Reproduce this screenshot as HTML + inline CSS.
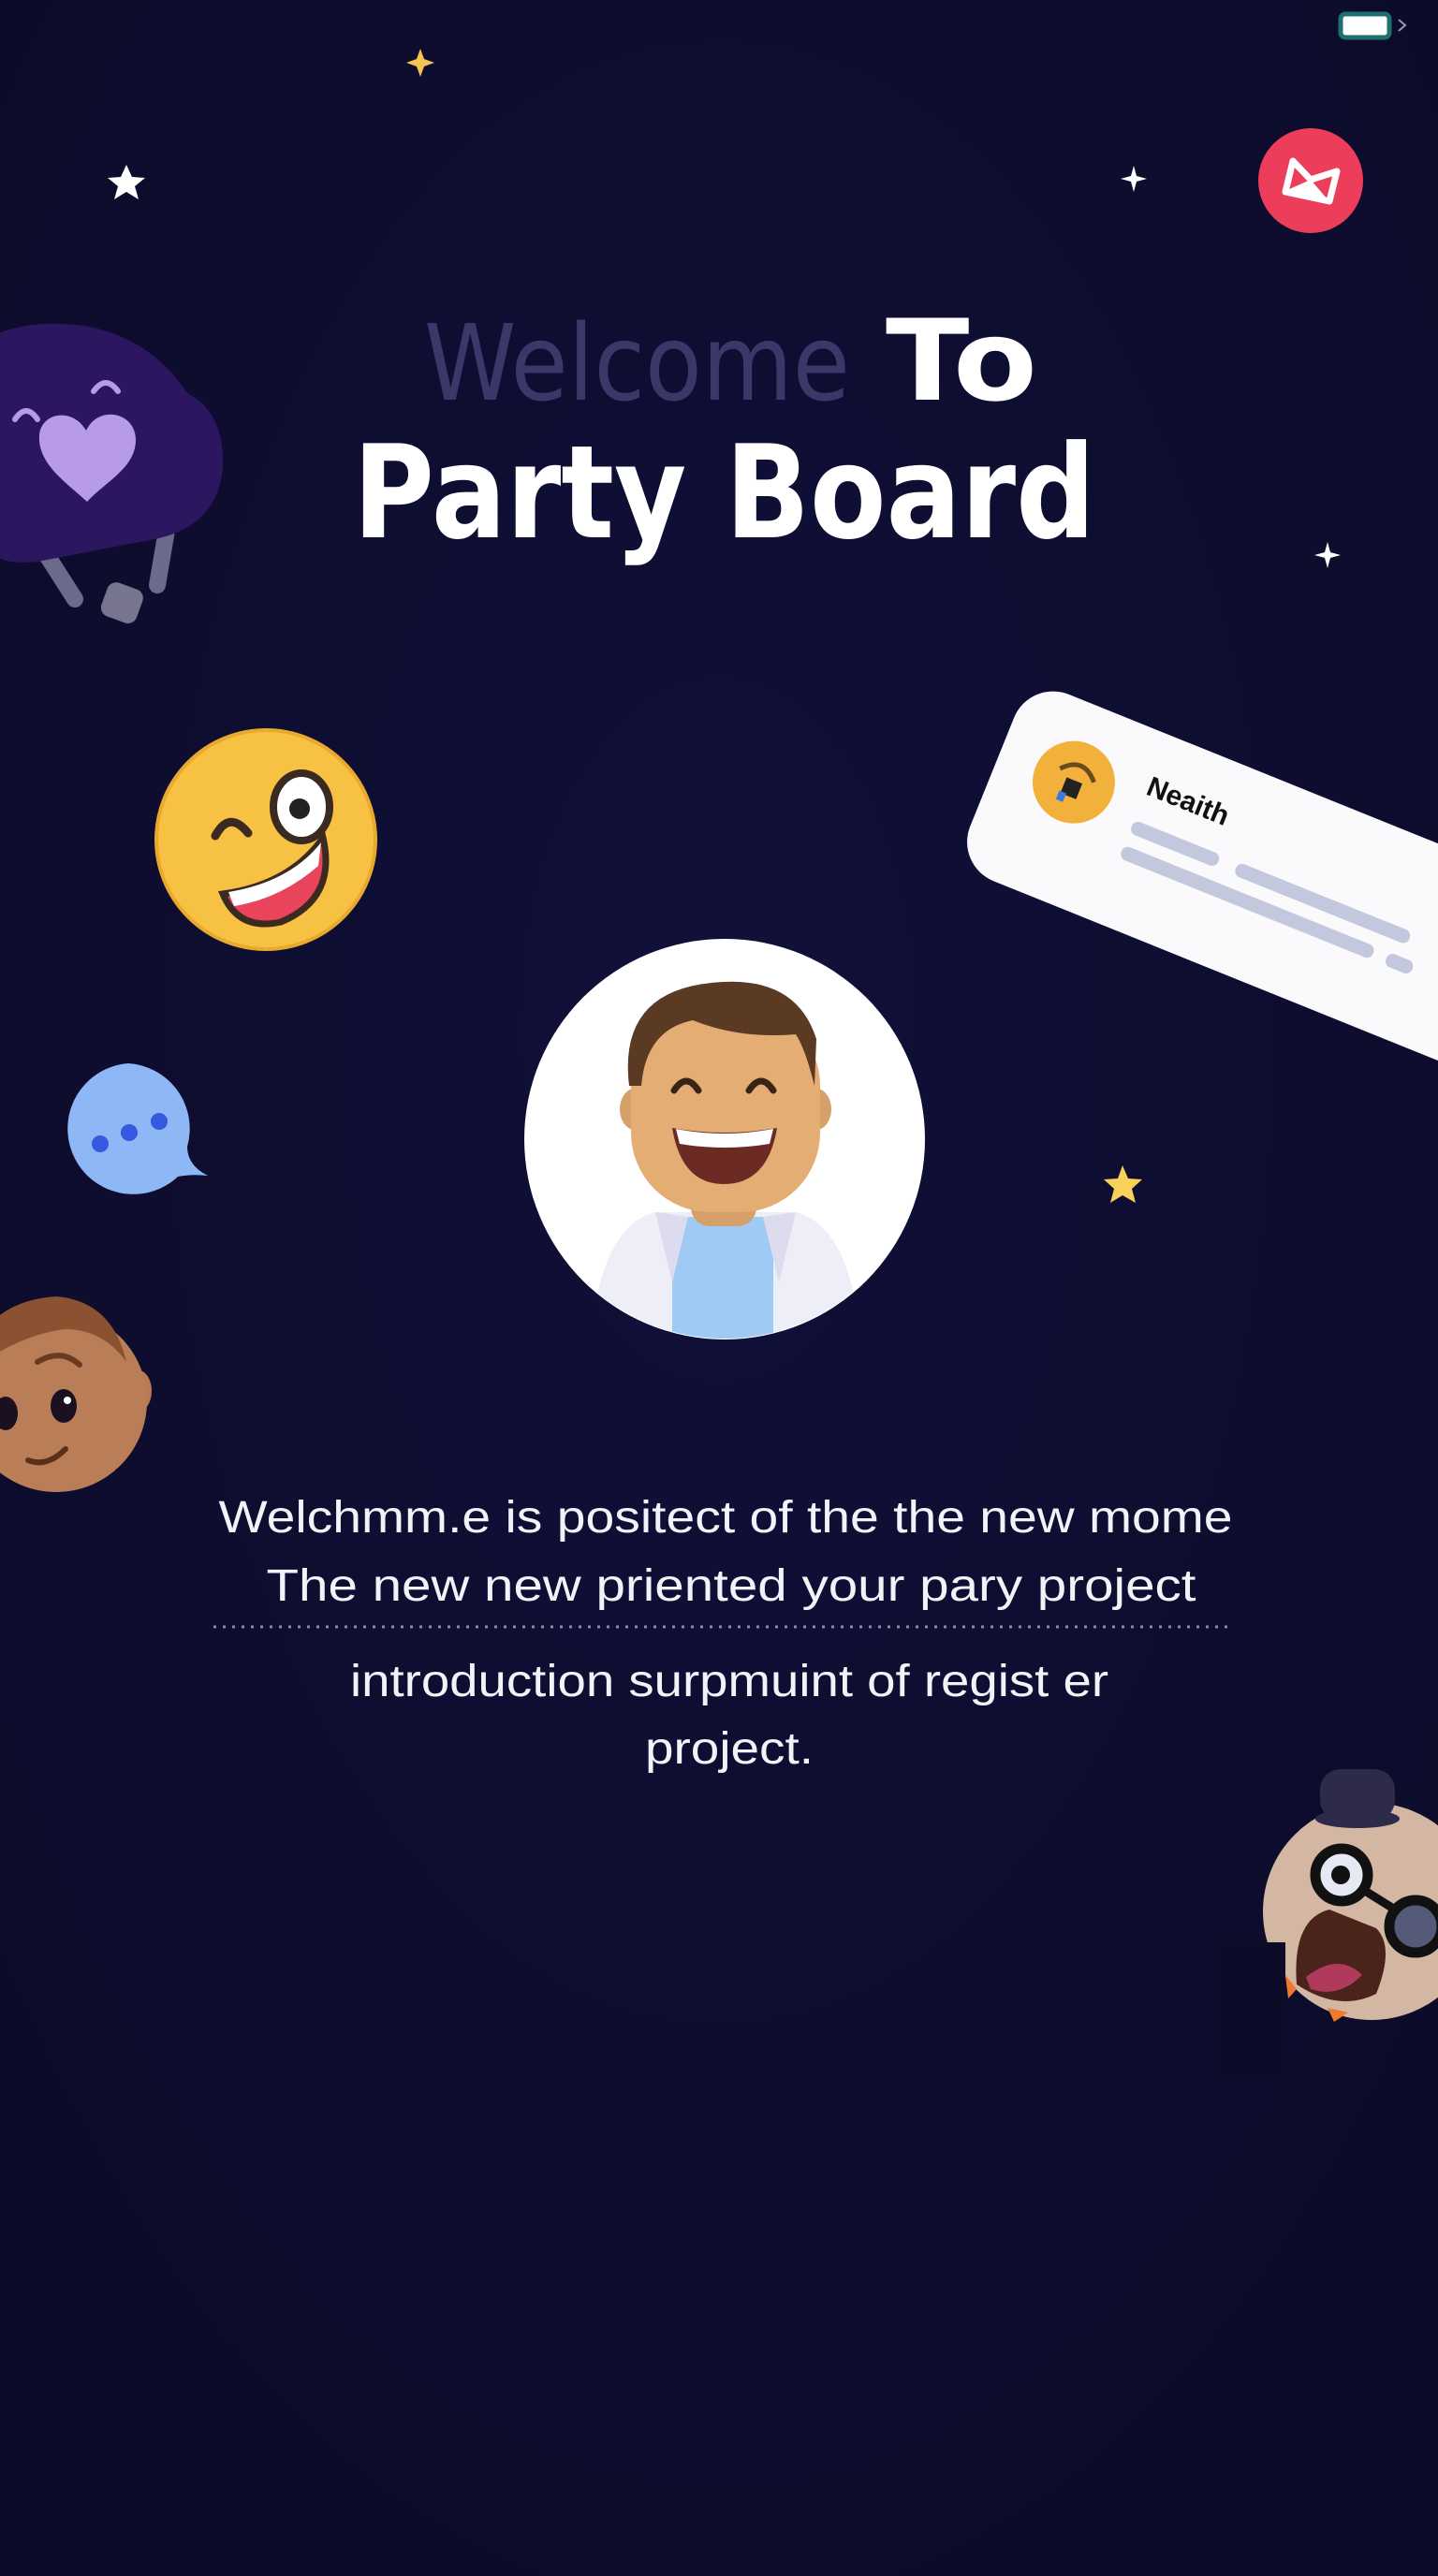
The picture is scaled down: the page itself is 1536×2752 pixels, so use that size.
<!DOCTYPE html>
<html><head><meta charset="utf-8">
<style>
html,body{margin:0;padding:0}
body{width:1536px;height:2752px;background:#0e0d2b;position:relative;overflow:hidden;font-family:"Liberation Sans",sans-serif}
.abs{position:absolute}
</style></head><body>
<svg class="abs" style="left:0;top:0" width="1536" height="2752" viewBox="0 0 1536 2752">
<defs>
<radialGradient id="bg" cx="50%" cy="40%" r="70%"><stop offset="0" stop-color="#10103a"/><stop offset="1" stop-color="#0c0b28"/></radialGradient>
<clipPath id="av"><circle cx="774" cy="1217" r="213"/></clipPath>
</defs>
<rect width="1536" height="2752" fill="url(#bg)"/>
<!-- battery -->
<rect x="1432" y="15" width="52" height="25" rx="5" fill="#fff" stroke="#1f6f6f" stroke-width="5"/>
<path d="M1494 21 L1501 27 L1494 33" stroke="#99a" stroke-width="2" fill="none"/>
<!-- red button -->
<circle cx="1400" cy="193" r="56" fill="#ec3d5a"/>
<path d="M1373 205 L1381 172 L1400 192 L1428 183 L1420 215 Z" fill="none" stroke="#fff" stroke-width="7" stroke-linejoin="round"/>
<path d="M1375 203 L1400 192 L1418 213 Z" fill="#fff"/>
<!-- stars -->
<g fill="#f5c451"><path d="M449 52 L453 63 L464 67 L453 71 L449 82 L445 71 L434 67 L445 63Z"/></g>
<g fill="#fff">
<path d="M135 176 L141 189 L155 190 L144 199 L148 213 L135 205 L122 213 L126 199 L115 190 L129 189Z"/>
<path d="M1211 177 L1214 188 L1225 191 L1214 194 L1211 205 L1208 194 L1197 191 L1208 188Z"/>
<path d="M1418 579 L1421 590 L1432 593 L1421 596 L1418 607 L1415 596 L1404 593 L1415 590Z"/>
</g>
<path d="M1199 1245 L1205 1259 L1220 1260 L1209 1270 L1213 1285 L1199 1277 L1186 1285 L1190 1270 L1179 1260 L1194 1259Z" fill="#f7d15a"/>
<!-- purple blob -->
<path d="M48 590 L80 640 M180 555 L168 625" stroke="#6c6a8a" stroke-width="18" stroke-linecap="round"/>
<rect x="110" y="625" width="40" height="38" rx="10" fill="#77758f" transform="rotate(20 130 645)"/>
<path d="M-10 360 Q30 340 90 348 Q160 360 200 420 Q240 440 238 500 Q232 560 170 575 L40 600 Q-10 605 -10 580Z" fill="#2c1660"/>
<path d="M93 536 C70 515 40 495 42 465 C44 440 78 435 92 460 C105 432 145 440 145 470 C145 500 112 515 93 536Z" fill="#b79ae8"/>
<path d="M100 418 Q113 400 126 418" stroke="#b79ae8" stroke-width="6" fill="none" stroke-linecap="round"/>
<path d="M16 448 Q28 430 40 448" stroke="#b79ae8" stroke-width="6" fill="none" stroke-linecap="round"/>
<!-- wink emoji -->
<circle cx="284" cy="897" r="117" fill="#f7c144" stroke="#e9a92c" stroke-width="4"/>
<ellipse cx="322" cy="862" rx="30" ry="36" fill="#fff" stroke="#3a2a20" stroke-width="8"/>
<circle cx="320" cy="864" r="11" fill="#222"/>
<path d="M230 893 Q245 865 265 890" stroke="#3a2a20" stroke-width="9" fill="none" stroke-linecap="round"/>
<path d="M238 955 Q310 945 345 895 Q360 960 300 985 Q255 995 238 955Z" fill="#e8455c" stroke="#3a2a20" stroke-width="7"/>
<path d="M244 953 Q310 942 343 900 L340 925 Q300 960 250 968Z" fill="#fff"/>
<!-- chat bubble -->
<path d="M137 1136 A70 70 0 1 0 190 1257 Q205 1254 222 1256 Q200 1245 200 1225 A70 70 0 0 0 137 1136Z" fill="#8db8f5"/>
<circle cx="107" cy="1222" r="9" fill="#3559e0"/><circle cx="138" cy="1210" r="9" fill="#3559e0"/><circle cx="170" cy="1198" r="9" fill="#3559e0"/>
<!-- avatar -->
<circle cx="774" cy="1217" r="214" fill="#fff"/>
<g clip-path="url(#av)">
<path d="M630 1440 Q640 1310 700 1295 L850 1295 Q910 1310 920 1440Z" fill="#eeeef8"/>
<rect x="718" y="1300" width="108" height="150" fill="#9fcaf3"/>
<path d="M700 1295 L735 1300 L718 1370Z M850 1295 L815 1300 L832 1370Z" fill="#dcdcee"/>
<rect x="738" y="1255" width="70" height="55" rx="20" fill="#d6a06a"/>
<ellipse cx="678" cy="1185" rx="16" ry="22" fill="#d6a06a"/><ellipse cx="872" cy="1185" rx="16" ry="22" fill="#d6a06a"/>
<rect x="674" y="1075" width="202" height="220" rx="85" fill="#e3ad74"/>
<path d="M672 1160 Q660 1060 760 1050 Q850 1040 872 1110 L870 1160 Q860 1120 850 1105 Q790 1110 740 1090 Q690 1100 685 1160Z" fill="#5b3a24"/>
<path d="M720 1165 Q733 1145 746 1165 M800 1165 Q813 1145 826 1165" stroke="#3a2415" stroke-width="7" fill="none" stroke-linecap="round"/>
<path d="M718 1205 Q773 1215 830 1205 Q820 1265 773 1265 Q728 1265 718 1205Z" fill="#6b2a24"/>
<path d="M722 1206 Q773 1216 826 1206 L822 1222 Q773 1230 726 1222Z" fill="#fff"/>
</g>
<!-- brown face -->
<ellipse cx="148" cy="1486" rx="14" ry="22" fill="#b87a55"/>
<circle cx="60" cy="1497" r="97" fill="#b97e58"/>
<path d="M-40 1470 Q-20 1390 60 1385 Q120 1390 135 1455 Q110 1420 70 1420 Q20 1425 -40 1470Z" fill="#8a5230"/>
<path d="M40 1455 Q65 1440 85 1458" stroke="#6a3a20" stroke-width="6" fill="none" stroke-linecap="round"/>
<ellipse cx="68" cy="1502" rx="14" ry="18" fill="#1a1020"/><circle cx="72" cy="1496" r="4" fill="#fff"/>
<ellipse cx="6" cy="1510" rx="13" ry="18" fill="#1a1020"/>
<path d="M30 1560 Q50 1568 70 1548" stroke="#5a3018" stroke-width="6" fill="none" stroke-linecap="round"/>
<!-- old man -->
<circle cx="1465" cy="2042" r="116" fill="#d3b7a3"/>
<rect x="1410" y="1890" width="80" height="55" rx="22" fill="#2d2a4a"/>
<ellipse cx="1450" cy="1943" rx="45" ry="10" fill="#2d2a4a"/>
<circle cx="1433" cy="2003" r="28" fill="#e6e8f4" stroke="#111" stroke-width="11"/>
<circle cx="1432" cy="2003" r="10" fill="#111"/>
<circle cx="1512" cy="2058" r="28" fill="#555a78" stroke="#111" stroke-width="11"/>
<path d="M1458 2020 L1490 2040" stroke="#111" stroke-width="9"/>
<path d="M1385 2120 Q1380 2050 1420 2040 L1470 2060 Q1490 2080 1470 2130 Q1430 2150 1385 2120Z" fill="#4a241a"/>
<path d="M1395 2112 Q1430 2085 1455 2110 Q1430 2135 1400 2125Z" fill="#b03a5c"/>
<rect x="1300" y="2075" width="73" height="145" fill="#0d0c28"/>
<path d="M1373 2110 L1385 2125 L1376 2135Z M1418 2145 L1440 2150 L1425 2160Z" fill="#f07a2a"/>
<!-- card -->
<g transform="translate(1100 725) rotate(22)">
<rect x="0" y="0" width="640" height="215" rx="45" fill="#fafafd"/>
<circle cx="85" cy="85" r="44" fill="#f2b13a"/>
<path d="M66 77 Q85 55 105 77" stroke="#6b4a20" stroke-width="5" fill="none"/>
<rect x="76" y="83" width="18" height="18" fill="#222"/><rect x="74" y="99" width="8" height="10" fill="#3a7ae0"/>
<text x="160" y="68" font-family="Liberation Sans,sans-serif" font-weight="bold" font-size="30" fill="#111">Neaith</text>
<rect x="160" y="98" width="100" height="15" rx="7" fill="#c4c8dd"/>
<rect x="160" y="127" width="290" height="15" rx="7" fill="#c4c8dd"/>
<rect x="280" y="98" width="200" height="15" rx="7" fill="#c4c8dd"/>
<rect x="465" y="127" width="30" height="15" rx="7" fill="#c4c8dd"/>
</g>
<!-- title -->
<text x="453" y="427" font-family="DejaVu Sans,sans-serif" font-size="112" fill="#3a3868" textLength="455" lengthAdjust="spacingAndGlyphs">Welcome</text>
<text x="946" y="427" font-family="DejaVu Sans,sans-serif" font-weight="bold" font-size="120" fill="#fff" textLength="162" lengthAdjust="spacingAndGlyphs">To</text>
<text x="377" y="574" font-family="DejaVu Sans,sans-serif" font-weight="bold" font-size="138" fill="#fff" textLength="793" lengthAdjust="spacingAndGlyphs">Party Board</text>
<!-- body text -->
<g font-family="Liberation Sans,sans-serif" font-size="48" fill="#f2f2f8" text-anchor="middle">
<text x="775" y="1637" textLength="1083" lengthAdjust="spacingAndGlyphs">Welchmm.e is positect of the the new mome</text>
<text x="781" y="1710" textLength="993" lengthAdjust="spacingAndGlyphs">The new new priented your  pary project</text>
<text x="779" y="1812" textLength="810" lengthAdjust="spacingAndGlyphs">introduction surpmuint of regist er</text>
<text x="779" y="1884" textLength="180" lengthAdjust="spacingAndGlyphs">project.</text>
</g>
<line x1="228" y1="1738" x2="1312" y2="1738" stroke="#8a8aa6" stroke-width="3" stroke-dasharray="3 7"/>
</svg>
</body></html>
